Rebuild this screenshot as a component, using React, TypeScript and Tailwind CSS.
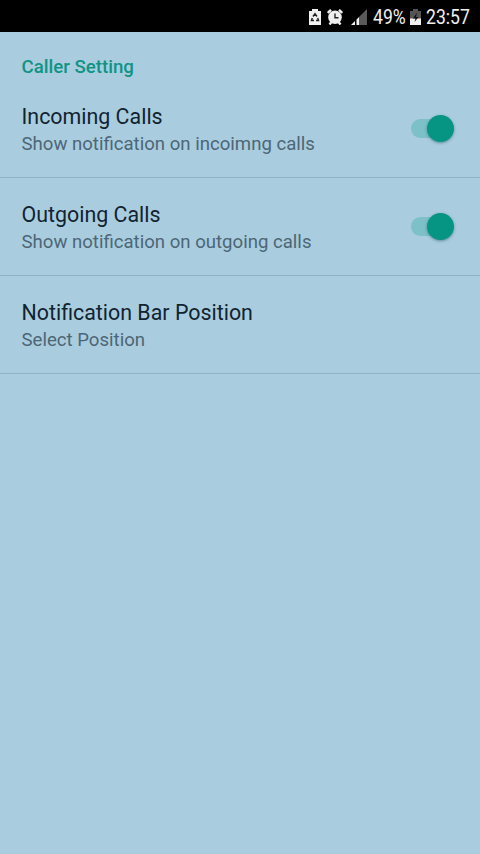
const preferences = [
  { title: 'Incoming Calls', summary: 'Show notification on incoimng calls', toggle: true },
  { title: 'Outgoing Calls', summary: 'Show notification on outgoing calls', toggle: true },
  { title: 'Notification Bar Position', summary: 'Select Position', toggle: false },
];

function Toggle() {
  return (
    <div className="relative w-[43px] h-[27px] mt-[11px]">
      <div className="absolute left-0 top-1 w-10 h-[19px] rounded-full bg-[#7dc0c7]"></div>
      <div className="absolute right-0 top-0 size-[27px] rounded-full bg-[#069583] shadow-[0_1px_3px_rgba(0,60,70,0.45)]"></div>
    </div>
  );
}

function StatusBar() {
  return (
    <div className="h-8 bg-black text-[#f0f0f0] flex items-center justify-end pt-[2px] pr-[10px] text-[20px]">
      <svg className="mr-[6px]" width="12" height="16" viewBox="0 0 12 16">
        <path d="M3 0h6v2h3v14H0V2h3z" fill="#f0f0f0" />
        <path d="M4 7.500 6 4.800l2 2.700M3.300 9 2.500 11.500h2.500M8.700 9l.8 2.500H7" fill="none" stroke="#222" strokeWidth="1.5" />
      </svg>
      <svg className="mr-[8px]" width="16" height="16" viewBox="0 0 16 16">
        <path d="M.8 4 4 .8M15.200 4 12 .8M2.500 15.500l2-2.500M13.500 15.500l-2-2.500" stroke="#f0f0f0" strokeWidth="2.400" />
        <circle cx="8" cy="8.200" r="6.800" fill="#f0f0f0" />
        <path d="M8 4.500v4.200h3.500" fill="none" stroke="#222" strokeWidth="1.4" />
      </svg>
      <svg className="mr-[6px]" width="16" height="16" viewBox="0 0 16 16">
        <path d="M16 0v16H8V8z" fill="#5a5a5a" />
        <path d="M8 8v8H5.500v-5.500zM4 12v4H0z" fill="#f0f0f0" />
      </svg>
      <span className="w-[33px] mr-1 origin-left scale-x-[0.88]">49%</span>
      <svg className="mr-[5px]" width="11" height="16" viewBox="0 0 11 16">
        <path d="M3 0h5v2h3v14H0V2h3z" fill="#555" />
        <path d="M0 9.500h11V16H0z" fill="#f0f0f0" />
        <path d="M7 3.500 3 9.500h2.500L4.500 13 8.500 8H6z" fill="#111" />
      </svg>
      <span className="w-[44px] origin-left scale-x-[0.88]">23:57</span>
    </div>
  );
}

function App() {
  return (
    <div className="h-screen bg-[#a9cddf] font-['Roboto',sans-serif] overflow-hidden">
      <StatusBar />
      <h2 className="h-[48px] pt-[25px] pl-[21.5px] text-[18.67px] leading-[21px] font-medium text-[#0f9484]">Caller Setting</h2>
      {preferences.map((item) => (
        <div key={item.title} className="h-[98px] pt-6 pl-[21.5px] pr-[26px] border-b border-[#8fb2c4] flex justify-between">
          <div>
            <div className="text-[21.4px] leading-[26px] text-[#122330]">{item.title}</div>
            <div className="pt-px text-[18.6px] leading-[26px] text-[#4d6676]">{item.summary}</div>
          </div>
          {item.toggle && <Toggle />}
        </div>
      ))}
    </div>
  );
}

export default App;
